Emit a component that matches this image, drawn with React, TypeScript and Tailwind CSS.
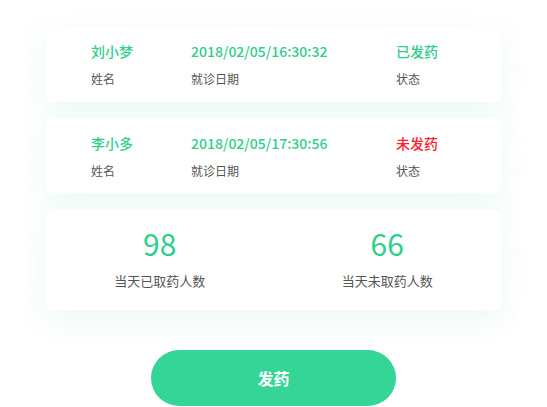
import React from 'react';

interface Record {
  name: string;
  date: string;
  status: string;
  dispensed: boolean;
}

const records: Record[] = [
  { name: '刘小梦', date: '2018/02/05/16:30:32', status: '已发药', dispensed: true },
  { name: '李小多', date: '2018/02/05/17:30:56', status: '未发药', dispensed: false },
];

const cardClass =
  'bg-white rounded-[8px] shadow-[0_10px_30px_rgba(46,200,140,0.10)]';

const RecordCard: React.FC<{ record: Record }> = ({ record }) => (
  <div className={`${cardClass} h-[76px] flex flex-col justify-center gap-[9px] pl-[45px]`}>
    <div className="grid grid-cols-[100px_205px_1fr] text-[14px] leading-[20px] font-medium">
      <span className="text-[#2fce8c]">{record.name}</span>
      <span className="text-[#2fce8c]">{record.date}</span>
      <span className={record.dispensed ? 'text-[#2fce8c]' : 'text-[#ff1d36]'}>{record.status}</span>
    </div>
    <div className="grid grid-cols-[100px_205px_1fr] text-[12px] leading-[18px] text-[#555]">
      <span>姓名</span>
      <span>就诊日期</span>
      <span>状态</span>
    </div>
  </div>
);

const Stat: React.FC<{ value: number; label: string }> = ({ value, label }) => (
  <div className="flex flex-col items-center gap-[11px]">
    <span className="text-[30px] leading-[36px] text-[#2fce8c]">{value}</span>
    <span className="text-[13px] leading-[18px] text-[#555]">{label}</span>
  </div>
);

export default function App() {
  return (
    <div
      className="w-[547px] h-[407px] bg-white overflow-hidden flex flex-col items-center"
      style={{ fontFamily: '"Noto Sans CJK SC", "Noto Sans", sans-serif' }}
    >
      <div className="w-[455px] mt-[26px] flex flex-col gap-[16px]">
        {records.map((r) => (
          <RecordCard key={r.name} record={r} />
        ))}
        <div className={`${cardClass} h-[100px] grid grid-cols-2 pt-[15px]`}>
          <Stat value={98} label="当天已取药人数" />
          <Stat value={66} label="当天未取药人数" />
        </div>
      </div>
      <button className="mt-[40px] w-[245px] h-[56px] shrink-0 rounded-full bg-[#35d497] text-white text-[16px] font-bold">
        发药
      </button>
    </div>
  );
}
